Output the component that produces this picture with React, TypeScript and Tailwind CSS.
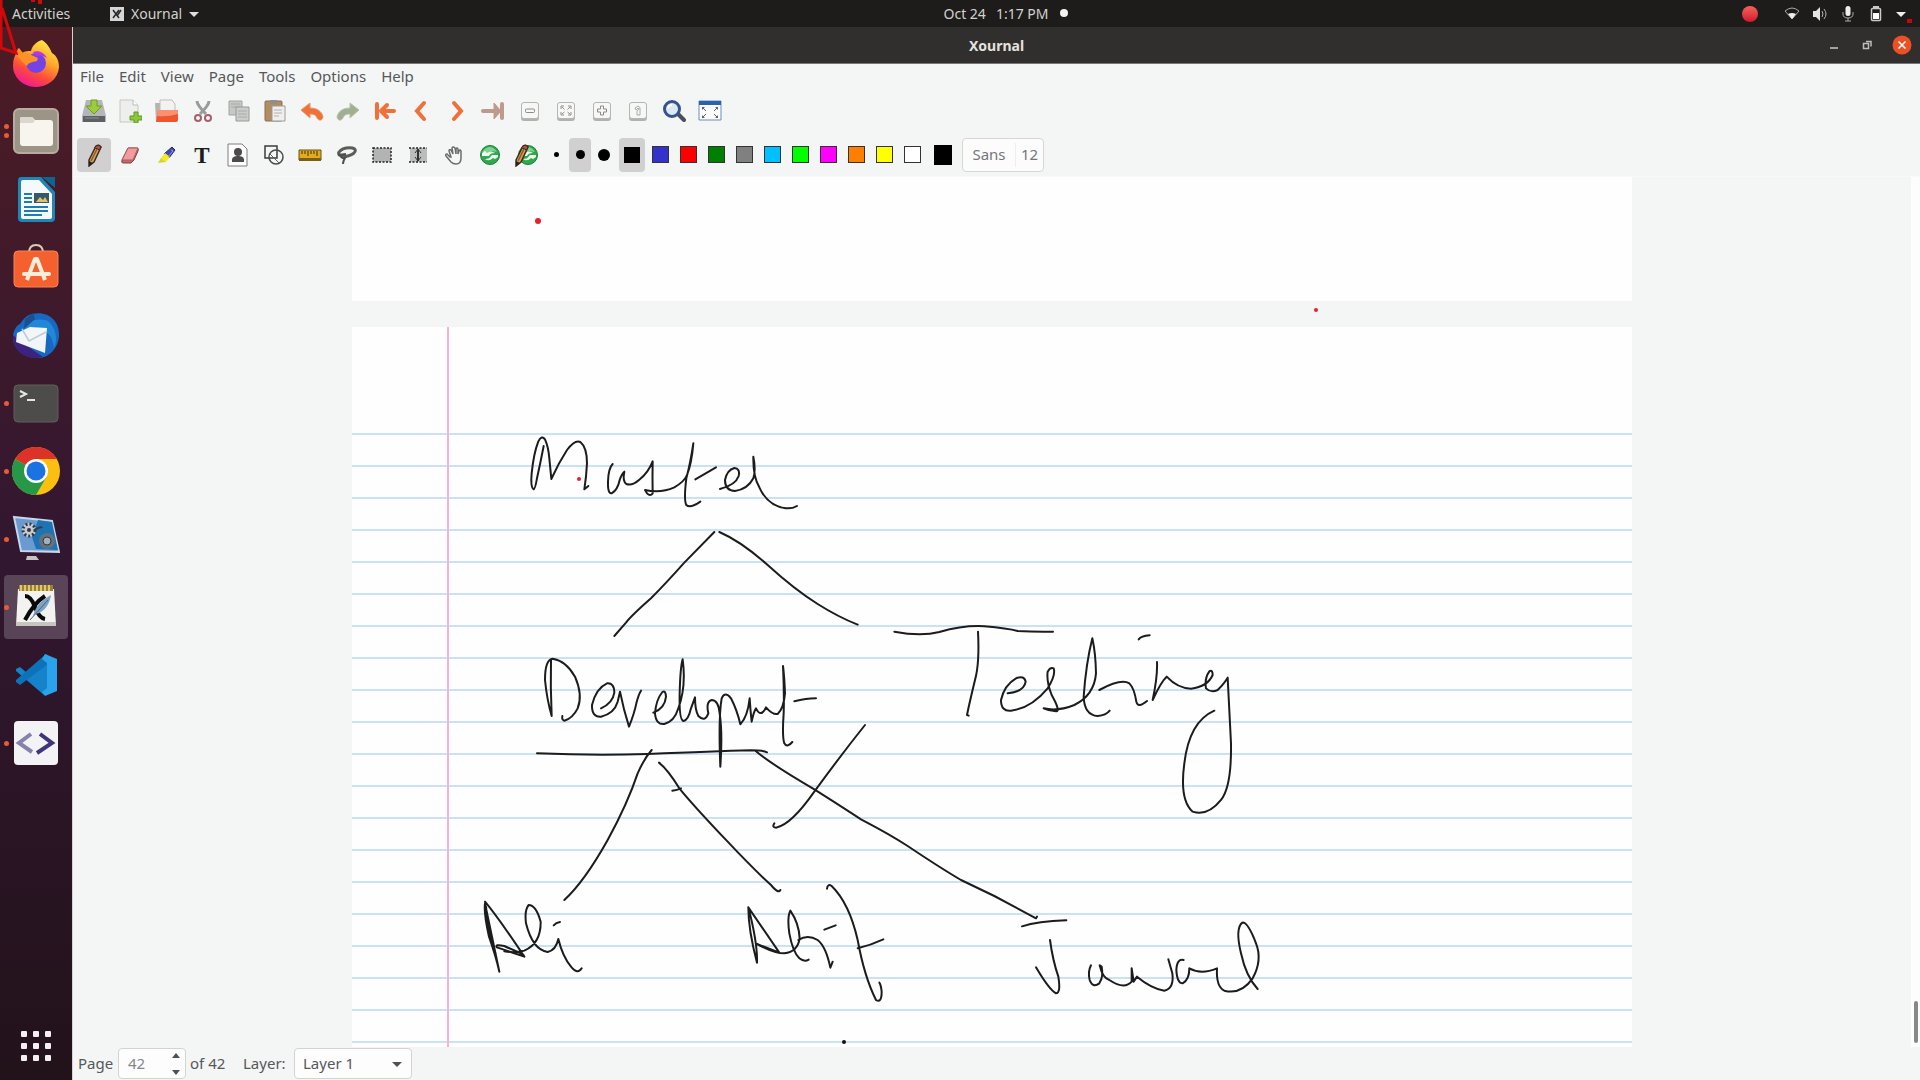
import React from "react";

type IconProps = { children: React.ReactNode; box?: number; size?: string };

function Icon({ children, box = 24, size = "h-6 w-6" }: IconProps) {
  return (
    <svg viewBox={`0 0 ${box} ${box}`} className={`${size} shrink-0`} fill="none" aria-hidden="true">
      {children}
    </svg>
  );
}

/* ---------- Dock ---------- */

const dockApps: { name: string; dots: number; active?: boolean; art: React.ReactNode }[] = [
  {
    name: "Firefox",
    dots: 0,
    art: (
      <>
        <defs>
          <linearGradient id="ff" x1="0.8" y1="0" x2="0.3" y2="1">
            <stop offset="0" stopColor="#fff04a" />
            <stop offset="0.4" stopColor="#ffa62b" />
            <stop offset="0.7" stopColor="#ff4b3a" />
            <stop offset="1" stopColor="#f0159a" />
          </linearGradient>
        </defs>
        <path d="M30 1c7 5 8 9 10 13 5 3 7 8 7 14a23 21 0 0 1-46-2c0-6 2-10 4-13l1-4 4 5c3-2 6-2 9-2 1-5 5-9 11-11z" fill="url(#ff)" />
        <circle cx="24" cy="24" r="10" fill="#7542e5" />
        <path d="M4 14l3-5 4 5c5-1 9 3 15 5l-1 3c-5 1-9 2-10 5-3-2-7-6-11-13z" fill="#ff9125" />
        <path d="M21 13c5-2 11 0 14 6-4-3-8-3-11-2z" fill="#b833e1" />
      </>
    ),
  },
  {
    name: "Files",
    dots: 2,
    art: (
      <>
        <rect x="2" y="2" width="44" height="44" rx="5" fill="#9c9486" stroke="#b5ad9f" strokeWidth="2" />
        <path d="M8 12q0-2 2-2h10l3 3h15q3 0 3 3v20q0 3-3 3H11q-3 0-3-3z" fill="#f8f5ee" />
        <path d="M8 12q0-2 2-2h10l3 3-2 3H8z" fill="#dcd7cc" />
      </>
    ),
  },
  {
    name: "Writer",
    dots: 0,
    art: (
      <>
        <path d="M9 2h20l14 15v26q0 4-4 4H10q-4 0-4-4V6q0-4 3-4z" fill="#1f86b6" />
        <path d="M11 5h16l13 14v23q0 2-2 2H11q-2 0-2-2V7q0-2 2-2z" fill="#f4fafc" />
        <path d="M30 2h13v11z" fill="#0f658f" />
        <path d="M12 19h8M12 23h8M12 27h8M12 32h24M12 36h24M12 40h18" stroke="#1f7cab" strokeWidth="2" />
        <rect x="22" y="18" width="15" height="10" fill="#38576b" />
        <path d="M24 27l4-5 3 3 2-3 3 5z" fill="#d8c763" />
      </>
    ),
  },
  {
    name: "Software",
    dots: 0,
    art: (
      <>
        <path d="M17 10q0-8 7-8t7 8" stroke="#d9cdb8" strokeWidth="2" />
        <rect x="2" y="8" width="44" height="36" rx="4" fill="#f4612f" stroke="#fb8157" />
        <path d="M15 37l8-21h2l8 21" stroke="#f8ecda" strokeWidth="4" strokeLinejoin="round" />
        <path d="M12 31h25" stroke="#f8ecda" strokeWidth="4" strokeLinecap="round" />
      </>
    ),
  },
  {
    name: "Thunderbird",
    dots: 0,
    art: (
      <>
        <path d="M20 3c16-4 28 7 27 22-1 14-12 23-23 22C10 46 0 37 1 24c1-5 3-9 7-11 3-5 7-9 12-10z" fill="#1668c0" />
        <path d="M1 24c-1 14 10 23 22 23 4 0 8-1 8-1L8 30z" fill="#3b237e" />
        <path d="M11 19c5-9 14-13 25-9 8 7 10 18 6 27-1-12-8-20-22-21z" fill="#2a9fe6" opacity="0.6" />
        <path d="M5 22l13-6 17 1-2 25L4 31z" fill="#f2f6f9" />
        <path d="M10 18l7 12 17-9" stroke="#bfcbd4" strokeWidth="1.5" />
        <path d="M13 8l8-6 2 6-11 10z" fill="#1a4f92" />
      </>
    ),
  },
  {
    name: "Terminal",
    dots: 1,
    art: (
      <>
        <rect x="2" y="6" width="44" height="37" rx="4" fill="#4d4c4a" stroke="#615f5d" />
        <path d="M8 12l6 3-6 3M15 21h8" stroke="#e6e6e6" strokeWidth="2" />
      </>
    ),
  },
  {
    name: "Chrome",
    dots: 1,
    art: (
      <>
        <circle cx="24" cy="24" r="24" fill="#fbbf10" />
        <path d="M24 24L3.200 12A24 24 0 0 1 44.800 12z" fill="#dd3227" />
        <path d="M3.200 12A24 24 0 0 0 24 48l10.400-18z" fill="#279748" />
        <path d="M24 12h20.800L34 30z" fill="#fbbf10" />
        <circle cx="24" cy="24" r="12" fill="#fff" />
        <circle cx="24" cy="24" r="9.500" fill="#1a73e0" />
      </>
    ),
  },
  {
    name: "Recorder",
    dots: 1,
    art: (
      <>
        <path d="M2 2l38 4 7 31-38-1z" fill="#6a9ad2" stroke="#c9d6e6" strokeWidth="2" />
        <path d="M26 5l14 2 6 28-22-1-4-12z" fill="#1d74b4" />
        <circle cx="17" cy="15" r="7" fill="#c5ccd4" />
        <circle cx="17" cy="15" r="6" stroke="#33383e" strokeWidth="3" strokeDasharray="2 2" />
        <circle cx="17" cy="15" r="2" fill="#33383e" />
        <path d="M22 15q7-4 8-2" stroke="#333b43" strokeWidth="2" />
        <circle cx="35" cy="26" r="8" fill="#65717c" />
        <circle cx="35" cy="26" r="4" fill="#9fb1be" stroke="#2f3a44" />
        <path d="M15 41h9l3 4H14z" fill="#c4c4c4" />
      </>
    ),
  },
  {
    name: "Xournal",
    dots: 1,
    active: true,
    art: (
      <>
        <path d="M6 6h36l2 37H4z" fill="#f2f2f0" />
        <path d="M4 39h40v4H4z" fill="#c7c5c0" />
        <path d="M7 2h34v6H7z" fill="#9a8136" />
        <path d="M9 2v6M13 2v6M17 2v6M21 2v6M25 2v6M29 2v6M33 2v6M37 2v6" stroke="#e2c769" strokeWidth="2" />
        <path d="M13 13q6 0 10 11t10 12M33 13Q22 20 13 37" stroke="#0a0a0a" strokeWidth="4" />
        <path d="M21 33c3-11 9-16 18-21-1 8-6 17-15 19z" fill="#7fa2c4" />
        <path d="M18 37l18-20" stroke="#46678a" />
      </>
    ),
  },
  {
    name: "Code",
    dots: 0,
    art: (
      <>
        <path d="M34 3L15 22l-7-6-4 2v2l28 24 4-4V5z" fill="#1583c9" />
        <path d="M34 3L4 29v2l4 3L36 13z" fill="#0d72b8" />
        <path d="M33 3l12 5v32l-12 5-3-4 5-4V12l-5-4z" fill="#2aa3ec" />
      </>
    ),
  },
  {
    name: "Editor",
    dots: 1,
    art: (
      <>
        <rect x="2" y="2" width="44" height="44" rx="4" fill="#f3f2f4" />
        <path d="M19 15L7 24l13 9" stroke="#8583ab" strokeWidth="4" />
        <path d="M28 15l12 9-15 10" stroke="#3d3678" strokeWidth="4" />
      </>
    ),
  },
];

function Dock() {
  return (
    <nav aria-label="Dock" className="flex w-[73px] shrink-0 flex-col border-r border-[#d8d0d2] bg-gradient-to-b from-[#4d1b24] via-[#321730] to-[#22121a] pt-0.5">
      {dockApps.map((a) => (
        <button key={a.name} aria-label={a.name} className="flex h-[68px] w-full items-center">
          <span className={a.active ? "relative flex h-16 w-full items-center justify-center before:absolute before:inset-y-0 before:left-1 before:right-1 before:rounded before:bg-white/20" : "relative flex h-16 w-full items-center justify-center"}>
            <span className="absolute left-1 flex flex-col gap-1">
              {Array.from({ length: a.dots }, (_, i) => (
                <span key={i} className="h-[5px] w-[5px] rounded-full bg-[#e95a35]" />
              ))}
            </span>
            <span className="relative">
              <Icon box={48} size="h-12 w-12">{a.art}</Icon>
            </span>
          </span>
        </button>
      ))}
      <button aria-label="Show applications" className="mb-[19px] mt-auto flex justify-center">
        <span className="grid grid-cols-3 gap-1.5">
          {Array.from({ length: 9 }, (_, i) => (
            <span key={i} className="h-1.5 w-1.5 rounded-[1px] bg-[#f5eef2]" />
          ))}
        </span>
      </button>
    </nav>
  );
}

/* ---------- Top bar ---------- */

function TopBar() {
  return (
    <header className="flex h-[27px] shrink-0 bg-[#1d1c1b] text-[14px] text-[#d3d1cd]">
      <button className="w-[72px] shrink-0 whitespace-nowrap pl-3 text-left">Activities</button>
      <div className="grid flex-1 grid-cols-[1fr_auto_1fr] items-center">
        <button className="flex items-center gap-[7px] pl-[38px]">
          <Icon box={14} size="h-3.5 w-3.5">
            <path d="M0 0h14v14H0z" fill="#d6d6d6" />
            <path d="M3 3l6 8M9 3l-6 8M11 3l-4 6" stroke="#26292c" strokeWidth="1.500" />
          </Icon>
          <span>Xournal</span>
          <Icon box={10} size="h-2.5 w-2.5">
            <path d="M0 3h10L5 8z" fill="#dedede" />
          </Icon>
        </button>
        <div className="relative flex gap-2.5">
          <span>Oct 24</span>
          <span>1:17 PM</span>
          <span className="absolute left-full top-1.5 ml-3 h-2 w-2 rounded-full bg-[#f2f2f2]" />
        </div>
        <div className="flex items-center justify-end gap-3 pr-[14px]">
          <span className="mr-[14px] h-4 w-4 rounded-full bg-gradient-to-b from-[#f4605a] to-[#cf1230]" />
          <Icon box={16} size="h-4 w-4">
            <path d="M1 5q7-6 14 0l-7 8z" stroke="#a9a9a7" />
            <path d="M4 8q4-2 8 0l-4 5z" fill="#efefef" />
          </Icon>
          <Icon box={16} size="h-4 w-4">
            <path d="M1 5h3l4-4v14l-4-4H1z" fill="#e4e4e4" />
            <path d="M10 5q2 3 0 6M12 3q4 5 0 10" stroke="#b4b4b2" />
          </Icon>
          <Icon box={16} size="h-4 w-4">
            <rect x="5.500" y="0" width="5" height="10" rx="2.500" fill="#efefef" />
            <path d="M3 6v2q0 4 5 4t5-4V6M8 12v3M5 15h6" stroke="#a9a9a7" />
          </Icon>
          <Icon box={16} size="h-4 w-4">
            <path d="M5 0h6v2H5z" fill="#c9c9c9" />
            <rect x="3.500" y="2.500" width="9" height="12" rx="1" stroke="#c9c9c9" strokeWidth="1.500" />
            <path d="M5 7h6v6H5z" fill="#fff" />
          </Icon>
          <Icon box={10} size="h-2.5 w-2.5">
            <path d="M0 3h10L5 8z" fill="#efefef" />
          </Icon>
        </div>
      </div>
    </header>
  );
}

function TitleBar() {
  return (
    <div className="grid h-[37px] shrink-0 grid-cols-[1fr_auto_1fr] items-center border-b border-[#777] bg-[#302f2e]">
      <span />
      <h1 className="pt-px text-[14px] font-bold text-[#e4e2de]">Xournal</h1>
      <div className="flex items-center justify-end gap-[17px] pr-2">
        <button aria-label="Minimize">
          <Icon box={16} size="h-4 w-4"><path d="M4 11h8" stroke="#c9c9c9" strokeWidth="1.500" /></Icon>
        </button>
        <button aria-label="Restore">
          <Icon box={16} size="h-4 w-4">
            <path d="M4.500 6.500h5v5h-5zM7 4.500h5v5" stroke="#bdbdbd" strokeWidth="1.500" />
          </Icon>
        </button>
        <button aria-label="Close">
          <Icon box={20} size="h-5 w-5">
            <circle cx="10" cy="10" r="9.500" fill="#ea5126" />
            <path d="M6.500 6.500l7 7M13.500 6.500l-7 7" stroke="#fff" strokeWidth="1.500" />
          </Icon>
        </button>
      </div>
    </div>
  );
}

/* ---------- Toolbars ---------- */

const keycap = (
  <>
    <rect x="3" y="4" width="18" height="18" rx="3" fill="#b1b1b0" />
    <rect x="3.500" y="3.500" width="17" height="16" rx="2.500" fill="#f7f7f6" stroke="#b5b5b4" />
  </>
);

type Tool = { name: string; art: React.ReactNode };

const fileToolGroups: Tool[][] = [
  [
    {
      name: "Save",
      art: (
        <>
          <path d="M4 1h16l4 16v6H0v-6z" fill="#b4b6b8" />
          <path d="M1 17h22v6H1z" fill="#5d6163" />
          <path d="M3 19h14" stroke="#8e9192" />
          <path d="M9 1h6v6h5l-8 8-8-8h5z" fill="#9ccc3c" stroke="#6d9e20" />
        </>
      ),
    },
    {
      name: "New",
      art: (
        <>
          <path d="M2 1h13l5 5v17H2z" fill="#eeeeec" stroke="#c6c6c4" />
          <path d="M15 1v5h5" fill="#fff" stroke="#b9b9b7" />
          <path d="M16 13h4v4h4v4h-4v3h-4v-3h-4v-4h4z" fill="#8cc63a" stroke="#5f9a1c" />
        </>
      ),
    },
    {
      name: "Open",
      art: (
        <>
          <path d="M1 4h8l2 3v15H2z" fill="#b9b2ae" />
          <path d="M6 1h12l3 4v10H6z" fill="#f2f2f0" stroke="#bdbdbb" />
          <path d="M4 11h20v10q0 2-2 2H2z" fill="#ef562b" />
          <path d="M4 11h20v4q-10 3-21 2z" fill="#fb9070" />
        </>
      ),
    },
  ],
  [
    {
      name: "Cut",
      art: (
        <>
          <path d="M6 2q0 4 9 13M18 2q0 4-9 13" stroke="#9b9b9b" strokeWidth="3" />
          <circle cx="7" cy="19" r="3" stroke="#a4606f" strokeWidth="2" />
          <circle cx="17" cy="19" r="3" stroke="#a4606f" strokeWidth="2" />
        </>
      ),
    },
    {
      name: "Copy",
      art: (
        <>
          <path d="M2 2h13v14H2z" fill="#c6c8c6" stroke="#a2a4a2" />
          <path d="M4 5h9M4 8h9" stroke="#a9aba9" />
          <path d="M9 8h13v14H9z" fill="#cbcdcb" stroke="#989a98" />
          <path d="M11 12h9M11 15h9M11 18h9" stroke="#a9aba9" />
        </>
      ),
    },
    {
      name: "Paste",
      art: (
        <>
          <rect x="2" y="2" width="17" height="20" rx="1" fill="#b48c62" stroke="#8f6d49" />
          <path d="M7 1h7v4H7z" fill="#8d8f8c" />
          <path d="M9 7h13v15H9z" fill="#efefed" stroke="#9c9c9a" />
          <path d="M11 11h8M11 14h8M11 17h5" stroke="#b2b2b0" />
        </>
      ),
    },
  ],
  [
    { name: "Undo", art: <path d="M1 11l9-7v5c8 0 12 4 13 9-1 4-4 4-6 1-1-3-3-4-7-4v4z" fill="#ef7138" stroke="#e39a6c" /> },
    { name: "Redo", art: <path d="M23 11l-9-7v5C6 9 2 13 1 18c1 4 4 4 6 1 1-3 3-4 7-4v4z" fill="#a0ae92" stroke="#b9c2ad" /> },
  ],
  [
    {
      name: "First page",
      art: <path d="M4 5v14M21 12H9M14 6l-6 6 6 6" stroke="#f0703c" strokeWidth="4" strokeLinecap="round" strokeLinejoin="round" />,
    },
    { name: "Previous page", art: <path d="M15 4l-7 8 7 8" stroke="#ef7038" strokeWidth="4" strokeLinecap="round" /> },
    { name: "Next page", art: <path d="M9 4l7 8-7 8" stroke="#ef7038" strokeWidth="4" strokeLinecap="round" /> },
    {
      name: "Last page",
      art: (
        <>
          <path d="M2 12h12" stroke="#bd9a8b" strokeWidth="4" strokeLinecap="round" />
          <path d="M13 4l7 8-7 8z" fill="#bd9a8b" stroke="#bd9a8b" strokeLinejoin="round" />
          <path d="M21 5v14" stroke="#bd9a8b" strokeWidth="4" strokeLinecap="round" />
        </>
      ),
    },
  ],
  [
    { name: "Zoom out", art: <>{keycap}<rect x="7.500" y="10" width="9" height="3.500" rx="1" stroke="#8b8b8a" /></> },
    {
      name: "Page width",
      art: <>{keycap}<path d="M7 10V7h3M14 7h3v3M17 13v3h-3M10 16H7v-3M8 8l2.500 2.500M16 8l-2.500 2.500M8 15l2.500-2M16 15l-2.500-2" stroke="#8f8f8e" /></>,
    },
    { name: "Zoom in", art: <>{keycap}<path d="M10.500 7h3v3h3v3h-3v3h-3v-3h-3v-3h3z" stroke="#8b8b8a" /></> },
    { name: "Normal size", art: <>{keycap}<path d="M9 9l3-2q3 1 2 4v5h-3v-4l2-2-1-1-2 2z" stroke="#a9a9a8" /></> },
    {
      name: "Set zoom",
      art: (
        <>
          <path d="M16 15l6 6" stroke="#4a4f58" strokeWidth="4" strokeLinecap="round" />
          <circle cx="10" cy="10" r="7.500" fill="#dfe8f2" stroke="#34538f" strokeWidth="3" />
          <path d="M6 9q1-3 4-3" stroke="#fff" strokeWidth="2" />
        </>
      ),
    },
    {
      name: "Fullscreen",
      art: (
        <>
          <path d="M1 2h22v19H1z" fill="#fbfbfb" stroke="#6e8db8" />
          <path d="M1 2h22v4H1z" fill="#2c62ad" />
          <path d="M4 11V8h3zM20 11V8h-3zM4 16v3h3zM20 16v3h-3z" fill="#5f6468" />
          <path d="M5 9l3 3M19 9l-3 3M5 18l3-3M19 18l-3-3" stroke="#5f6468" />
        </>
      ),
    },
  ],
];

const pencilArt = (
  <>
    <path d="M7 17L14 3q3-2 5 1l-7 15-5 4z" fill="#d8a25e" stroke="#3c2b1c" strokeWidth="1.500" />
    <path d="M14 3q3-2 5 1l-1.500 3-5-2.500z" fill="#b64a4c" stroke="#3c2b1c" />
    <path d="M9 18l6-12" stroke="#8c5b27" strokeWidth="1.500" />
    <path d="M7 18l4 2-4 3z" fill="#222" />
  </>
);

const recycle = (
  <>
    <circle cx="12" cy="12" r="9.500" fill="#2fa84e" stroke="#16843a" />
    <path d="M4 9q8-10 15 0-6-2-9 1z" fill="#7fd48d" />
    <path d="M4 10l3-2 2 2q4-3 8 0-5 0-6 3H4zM20 14l-3 2-2-1q-4 4-8 1 5 0 6-3l1-1h6z" fill="#effbef" />
  </>
);

const penTools: (Tool & { on?: boolean })[] = [
  { name: "Pencil", on: true, art: pencilArt },
  {
    name: "Eraser",
    art: (
      <>
        <path d="M10 5h9q2 0 1 3l-4 9-3 3H5q-2 0-1-3z" fill="#c9676b" stroke="#7e4547" />
        <path d="M10 5h10L15 17H4z" fill="#f29a9c" stroke="#a65f61" />
      </>
    ),
  },
  {
    name: "Highlighter",
    art: (
      <>
        <path d="M18 4l3 3-6 8-5-4z" fill="#3c46b5" stroke="#23296e" />
        <path d="M11 10l5 4-4 5-5-4z" fill="#f2ee1e" />
        <path d="M17 7l2 1-5 6" stroke="#9ba5e6" />
        <path d="M7 15l5 4-8 1z" fill="#d8d232" />
      </>
    ),
  },
  { name: "Text", art: <text x="12" y="20" textAnchor="middle" fontSize="23" fontWeight="700" fill="#1c1c1c" fontFamily="Liberation Serif, serif">T</text> },
  {
    name: "Image",
    art: (
      <>
        <path d="M2 1h14l5 5v17H2z" fill="#fcfcfc" stroke="#7e7e7e" />
        <circle cx="12" cy="9" r="4" fill="#4b4b4b" />
        <path d="M6 19q-1-6 5-6h2q6 0 5 6z" fill="#4b4b4b" />
      </>
    ),
  },
  {
    name: "Shape recognizer",
    art: (
      <>
        <path d="M3 3h12v12H3z" stroke="#3b3b3b" strokeWidth="1.500" />
        <circle cx="14" cy="14" r="7" stroke="#4b4b4b" strokeWidth="1.500" />
        <path d="M8 11l9 9" stroke="#5c5c5c" />
      </>
    ),
  },
  {
    name: "Ruler",
    art: (
      <>
        <path d="M1 7h22v10H1z" fill="#e0ab1d" stroke="#6b5314" />
        <path d="M1 15h22v3H1z" fill="#7c5d12" />
        <path d="M4 8v3M7 8v3M10 8v5M13 8v3M16 8v3M19 8v5" stroke="#3d310d" />
      </>
    ),
  },
  {
    name: "Select region",
    art: (
      <>
        <ellipse cx="13" cy="9" rx="8.500" ry="4" stroke="#5b5d5a" strokeWidth="3" transform="rotate(-12 13 9)" />
        <path d="M4 12l8-1M6 11q1 5 5 4-2 3-2 6" stroke="#4d4f4c" strokeWidth="2" />
      </>
    ),
  },
  {
    name: "Select rectangle",
    art: <rect x="3" y="5" width="18" height="14" fill="#b3b3b3" stroke="#222" strokeWidth="1.500" strokeDasharray="2 1.500" />,
  },
  {
    name: "Vertical space",
    art: (
      <>
        <rect x="4" y="5" width="17" height="14" fill="#bcbcbc" />
        <path d="M3 5h18M3 19h18" stroke="#222" strokeWidth="1.500" strokeDasharray="2 1.500" />
        <path d="M12 6v12" stroke="#333" strokeWidth="2" />
        <path d="M9 10l3-4 3 4M9 14l3 4 3-4" stroke="#333" />
      </>
    ),
  },
  {
    name: "Hand",
    art: (
      <path
        d="M8 14l-3-3q-2 0-1 2l5 6q2 2 5 2 5 0 5-6V8q-1-2-2 0l-1 3V6q-1-2-2 0v5l-1-6q-2-2-3 0l1 6-2-4q-2-1-2 1l2 6z"
        fill="#f6f6f6"
        stroke="#6c6c6c"
        strokeWidth="1.500"
      />
    ),
  },
  { name: "Refresh", art: recycle },
  {
    name: "Default pen",
    art: (
      <>
        <g transform="translate(2 0)">{recycle}</g>
        <g transform="translate(-5 0)">{pencilArt}</g>
      </>
    ),
  },
];

const swatches: { name: string; cls: string }[] = [
  { name: "Blue", cls: "bg-[#3333cc]" },
  { name: "Red", cls: "bg-[#ff0000]" },
  { name: "Green", cls: "bg-[#008000]" },
  { name: "Gray", cls: "bg-[#808080]" },
  { name: "Light blue", cls: "bg-[#00c0ff]" },
  { name: "Light green", cls: "bg-[#00ff00]" },
  { name: "Magenta", cls: "bg-[#ff00ff]" },
  { name: "Orange", cls: "bg-[#ff8000]" },
  { name: "Yellow", cls: "bg-[#ffff00]" },
  { name: "White", cls: "bg-white" },
];

function Toolbars() {
  return (
    <div className="shrink-0 bg-[#f4f5f5]">
      <div role="menubar" className="flex h-[25px] items-center gap-[15px] pl-[7px] text-[15px] text-[#55585a]">
        {["File", "Edit", "View", "Page", "Tools", "Options", "Help"].map((m) => (
          <button role="menuitem" key={m}>{m}</button>
        ))}
      </div>
      <div className="flex h-11 items-center gap-px pl-[3px]">
        {fileToolGroups.map((group) => (
          <div key={group[0].name} className="flex">
            {group.map((t) => (
              <button key={t.name} aria-label={t.name} className="flex h-9 w-9 items-center justify-center">
                <Icon>{t.art}</Icon>
              </button>
            ))}
          </div>
        ))}
      </div>
      <div className="flex h-[43px] items-center pl-[3px]">
        {penTools.map((t) => (
          <button key={t.name} aria-label={t.name} className={t.on ? "mx-px flex h-[34px] w-[34px] items-center justify-center rounded bg-[#d0d0d0]" : "flex h-9 w-9 items-center justify-center"}>
            <Icon>{t.art}</Icon>
          </button>
        ))}
        <button aria-label="Fine" className="flex h-[34px] w-6 items-center justify-center"><span className="h-[5px] w-[5px] rounded-full bg-black" /></button>
        <button aria-label="Medium" className="mx-px flex h-[34px] w-[22px] items-center justify-center rounded bg-[#d0d0d0]"><span className="h-[9px] w-[9px] rounded-full bg-black" /></button>
        <button aria-label="Thick" className="flex h-[34px] w-6 items-center justify-center"><span className="h-3 w-3 rounded-full bg-black" /></button>
        <button aria-label="Black" className="ml-[3px] mr-px flex h-[34px] w-[26px] items-center justify-center rounded bg-[#d0d0d0]"><span className="h-4 w-4 bg-black" /></button>
        {swatches.map((s) => (
          <button key={s.name} aria-label={s.name} className="flex h-[34px] w-7 items-center justify-center">
            <span className={`h-[17px] w-[17px] border border-[#333] ${s.cls}`} />
          </button>
        ))}
        <button aria-label="Current color" className="flex h-[34px] w-[34px] items-center justify-center"><span className="h-5 w-[18px] bg-black" /></button>
        <button className="ml-0.5 flex h-[34px] items-center rounded border border-[#d6d6d4] bg-[#fcfcfc] text-[15px] text-[#74767a]">
          <span className="flex h-6 w-[53px] items-center justify-center border-r border-[#eee]">Sans</span>
          <span className="w-[27px] text-center">12</span>
        </button>
      </div>
      <div className="h-px bg-[#f9f9f9]" />
    </div>
  );
}

/* ---------- Canvas ---------- */

const upperInk = [
  "M128 138Q118 190 108 235Q102 268 98 268Q88 262 92 220Q98 160 112 124Q122 104 132 118Q142 140 145 175L151 237Q172 190 198 150Q222 118 238 126Q258 142 258 190Q256 230 250 268L262 258",
  "M335 192Q322 205 321 245Q320 282 332 280Q350 270 356 240Q362 222 370 215Q364 242 376 252Q394 258 414 240Q442 218 455 184Q454 230 455 280Q448 290 438 280L432 270Q480 280 520 262Q550 245 558 225Q572 190 577 130Q568 190 556 235Q548 300 556 315Q568 326 598 305",
  "M583 238L645 202",
  "M657 267Q704 255 713 228Q718 205 700 204Q678 210 672 240Q672 272 702 273Q740 268 757 235Q765 210 757 170Q756 230 775 262Q800 318 855 325Q875 326 888 318",
  "M640 396L550 488Q490 555 450 595Q390 648 375 668L340 708",
  "M655 396Q720 424 800 495Q880 568 950 612Q1010 650 1070 674",
  "M150 780Q148 860 152 948Q138 900 132 840Q132 778 155 776Q195 782 222 830Q246 885 230 925Q215 955 190 962Q182 960 184 948",
  "M300 925Q335 910 340 878Q340 848 318 850Q285 865 273 915Q272 952 300 950Q340 940 350 905L357 875Q368 930 384 980Q400 940 406 910Q412 885 420 872",
  "M457 938Q492 925 495 890Q494 870 484 876Q465 900 462 940Q465 975 490 972Q520 965 532 925Q556 860 545 778Q538 800 536 880Q534 962 548 963Q562 960 570 925L582 892Q582 930 592 948Q612 968 622 940Q614 905 632 900Q652 900 656 940Q665 1000 658 1100Q652 950 662 895Q672 872 690 895Q708 930 718 973Q740 950 746 895Q748 930 752 965Q758 935 765 925Q780 955 795 922Q815 945 830 942Q848 925 852 880Q850 830 846 798Q850 880 848 940Q843 1010 850 1030Q858 1045 874 1026",
  "M880 904Q915 895 945 895",
];

const lowerInk = [
  "M228 40Q400 47 560 42Q760 34 870 31Q905 31 918 37",
  "M572 30Q550 55 530 100Q500 190 440 300Q370 425 310 480",
  "M594 68Q620 88 655 145Q700 200 800 305Q880 390 930 435Q952 462 958 450",
  "M634 152Q648 150 660 145",
  "M885 34Q930 72 1060 148Q1150 205 1200 238Q1290 285 1340 318Q1440 385 1500 420L1600 468L1725 535L1728 530",
  "M1212 -45Q1140 45 1060 155Q990 255 945 263Q932 262 940 250",
  "M115 695Q95 600 72 490Q68 520 84 590Q105 650 115 695M75 500Q85 600 104 640M72 485Q110 530 190 650L108 622Q100 612 130 618Q160 632 180 640L188 646M130 634Q165 640 190 632Q240 610 239 545Q225 495 203 495Q190 510 195 550Q215 630 260 636Q285 630 292 597Q305 650 330 680Q350 705 362 685",
  "M278 556Q285 548 297 546",
  "M888 668Q890 610 862 502Q862 570 888 668M862 502L955 638L888 612Q940 640 970 640Q1010 635 1016 595Q1014 550 988 512Q978 530 985 580Q995 635 1015 655Q1030 667 1043 659",
  "M1012 600Q1040 582 1070 600Q1095 620 1108 683L1115 665",
  "M1090 569L1124 556",
  "M1098 446Q1100 430 1112 438Q1165 490 1190 600Q1210 710 1245 780Q1262 790 1262 755Q1260 735 1255 728",
  "M1190 625Q1230 615 1267 598",
];

const rightInk = [
  "M100 95Q180 110 235 96Q310 75 370 79Q440 85 470 93Q520 96 576 95",
  "M351 95Q356 190 342 240Q325 310 318 345L323 347",
  "M440 280Q490 275 494 245Q490 225 465 235Q430 255 420 300Q420 335 450 332Q510 325 560 265Q585 225 578 205Q568 200 560 215Q556 245 572 285Q600 335 585 334Q565 333 548 325Q590 335 640 315Q700 285 705 220Q704 160 694 115Q675 190 668 290Q670 345 710 348Q735 346 746 332",
  "M715 270Q780 235 805 250Q820 265 826 305Q830 326 858 303",
  "M833 118Q840 108 866 106",
  "M888 186Q890 230 875 300Q900 245 917 230Q950 265 990 266Q1040 260 1055 225Q1055 208 1045 214Q1030 235 1035 265Q1050 280 1070 270Q1090 250 1100 233Q1105 330 1110 430Q1112 560 1080 600Q1040 650 995 635Q955 600 970 490Q985 365 1060 332",
  "M483 979Q530 964 616 961",
  "M567 1020Q575 1080 592 1130Q600 1180 585 1180Q565 1170 525 1102",
  "M690 1096Q680 1115 686 1140Q695 1165 715 1150Q728 1130 722 1100L716 1096Q725 1135 745 1140Q790 1170 812 1145L812 1105L818 1145L828 1130Q870 1165 910 1172Q940 1165 934 1120L922 1078",
  "M968 1080Q948 1075 946 1110Q948 1150 965 1150Q985 1140 985 1105Q1020 1125 1068 1105Q1065 1160 1090 1172Q1140 1185 1175 1135Q1205 1080 1185 1030Q1160 965 1144 968Q1122 985 1140 1060Q1155 1130 1190 1167",
];

function Ink({ paths, at }: { paths: string[]; at: string }) {
  return (
    <g transform={`${at} scale(0.33333)`} stroke="#1c1c1c" strokeWidth="6" strokeLinecap="round" strokeLinejoin="round">
      {paths.map((d) => (
        <path key={d} d={d} />
      ))}
    </g>
  );
}

function Canvas() {
  const rules = Array.from({ length: 20 }, (_, i) => 434 + i * 32);
  return (
    <main className="flex min-h-0 flex-1 bg-[#f4f5f5]">
      <div className="flex min-w-0 flex-1 justify-center overflow-hidden">
        <div className="relative flex w-[1280px] shrink-0 flex-col gap-[26px]">
          <div className="h-[124px] shrink-0 bg-[#fefefe]" />
          <div className="flex-1 bg-[#fefefe]" />
          <svg viewBox="351 177 1280 870" className="absolute inset-x-0 top-0 w-full" fill="none" role="img" aria-label="Handwritten tree diagram">
            {rules.map((y) => (
              <path key={y} d={`M351 ${y}H1631`} stroke="#cbe1f6" strokeWidth="2" />
            ))}
            <path d="M447 327V1047" stroke="#f3b3d6" strokeWidth="2" />
            <Ink paths={upperInk} at="translate(500 400)" />
            <Ink paths={lowerInk} at="translate(460 740)" />
            <Ink paths={rightInk} at="translate(860 600)" />
            <circle cx="843" cy="1042" r="2" fill="#111" />
            <circle cx="537" cy="221" r="3" fill="#e8202a" />
            <circle cx="1315" cy="310" r="2" fill="#e8202a" />
            <circle cx="578" cy="479" r="2" fill="#e8202a" />
          </svg>
        </div>
      </div>
      <div className="flex w-[9px] shrink-0 flex-col justify-end bg-[#fdfdfd] pb-1">
        <div className="mx-auto h-[42px] w-1 rounded-full bg-[#868889]" />
      </div>
    </main>
  );
}

function StatusBar() {
  return (
    <footer className="flex h-[33px] shrink-0 items-center bg-[#f4f5f5] pl-[5px] text-[15px] text-[#55585a]">
      <label htmlFor="page" className="w-10">Page</label>
      <div className="flex h-[31px] w-[68px] items-center rounded border border-[#d3d3d1] bg-[#fdfdfd]">
        <input id="page" defaultValue="42" className="w-[53px] bg-transparent pl-[9px] text-[#85878a] outline-none" />
        <div className="flex flex-col gap-2">
          <button aria-label="Next"><Icon box={8} size="h-2 w-2"><path d="M0 6h8L4 1z" fill="#4e5153" /></Icon></button>
          <button aria-label="Previous"><Icon box={8} size="h-2 w-2"><path d="M0 2h8L4 7z" fill="#4e5153" /></Icon></button>
        </div>
      </div>
      <span className="ml-1 w-[53px]">of 42</span>
      <label htmlFor="layer" className="w-[51px]">Layer:</label>
      <div className="relative flex items-center">
        <select id="layer" className="h-[31px] w-[118px] appearance-none rounded border border-[#d3d3d1] bg-[#fdfdfd] pl-2">
          <option>Layer 1</option>
        </select>
        <span className="pointer-events-none absolute right-2.5">
          <Icon box={10} size="h-2.5 w-2.5"><path d="M0 3h10L5 8z" fill="#4e5153" /></Icon>
        </span>
      </div>
    </footer>
  );
}

export default function App() {
  return (
    <div className="relative flex h-screen flex-col overflow-hidden font-['Noto_Sans','Open_Sans',sans-serif]">
      <TopBar />
      <div className="flex min-h-0 flex-1">
        <Dock />
        <div className="flex min-w-0 flex-1 flex-col">
          <TitleBar />
          <Toolbars />
          <Canvas />
          <StatusBar />
        </div>
      </div>
      <svg viewBox="0 0 60 60" className="pointer-events-none absolute left-0 top-0 h-[60px] w-[60px]" fill="none" aria-hidden="true">
        <path d="M1 0v48l15 5L2 8" stroke="#d40808" strokeWidth="3" />
        <path d="M31 0h4v2h-4zM38 0h4v4h-4z" fill="#d40808" />
      </svg>
      <span className="pointer-events-none absolute right-2 top-[19px] h-1 w-[5px] bg-[#c00a0a]" />
    </div>
  );
}
